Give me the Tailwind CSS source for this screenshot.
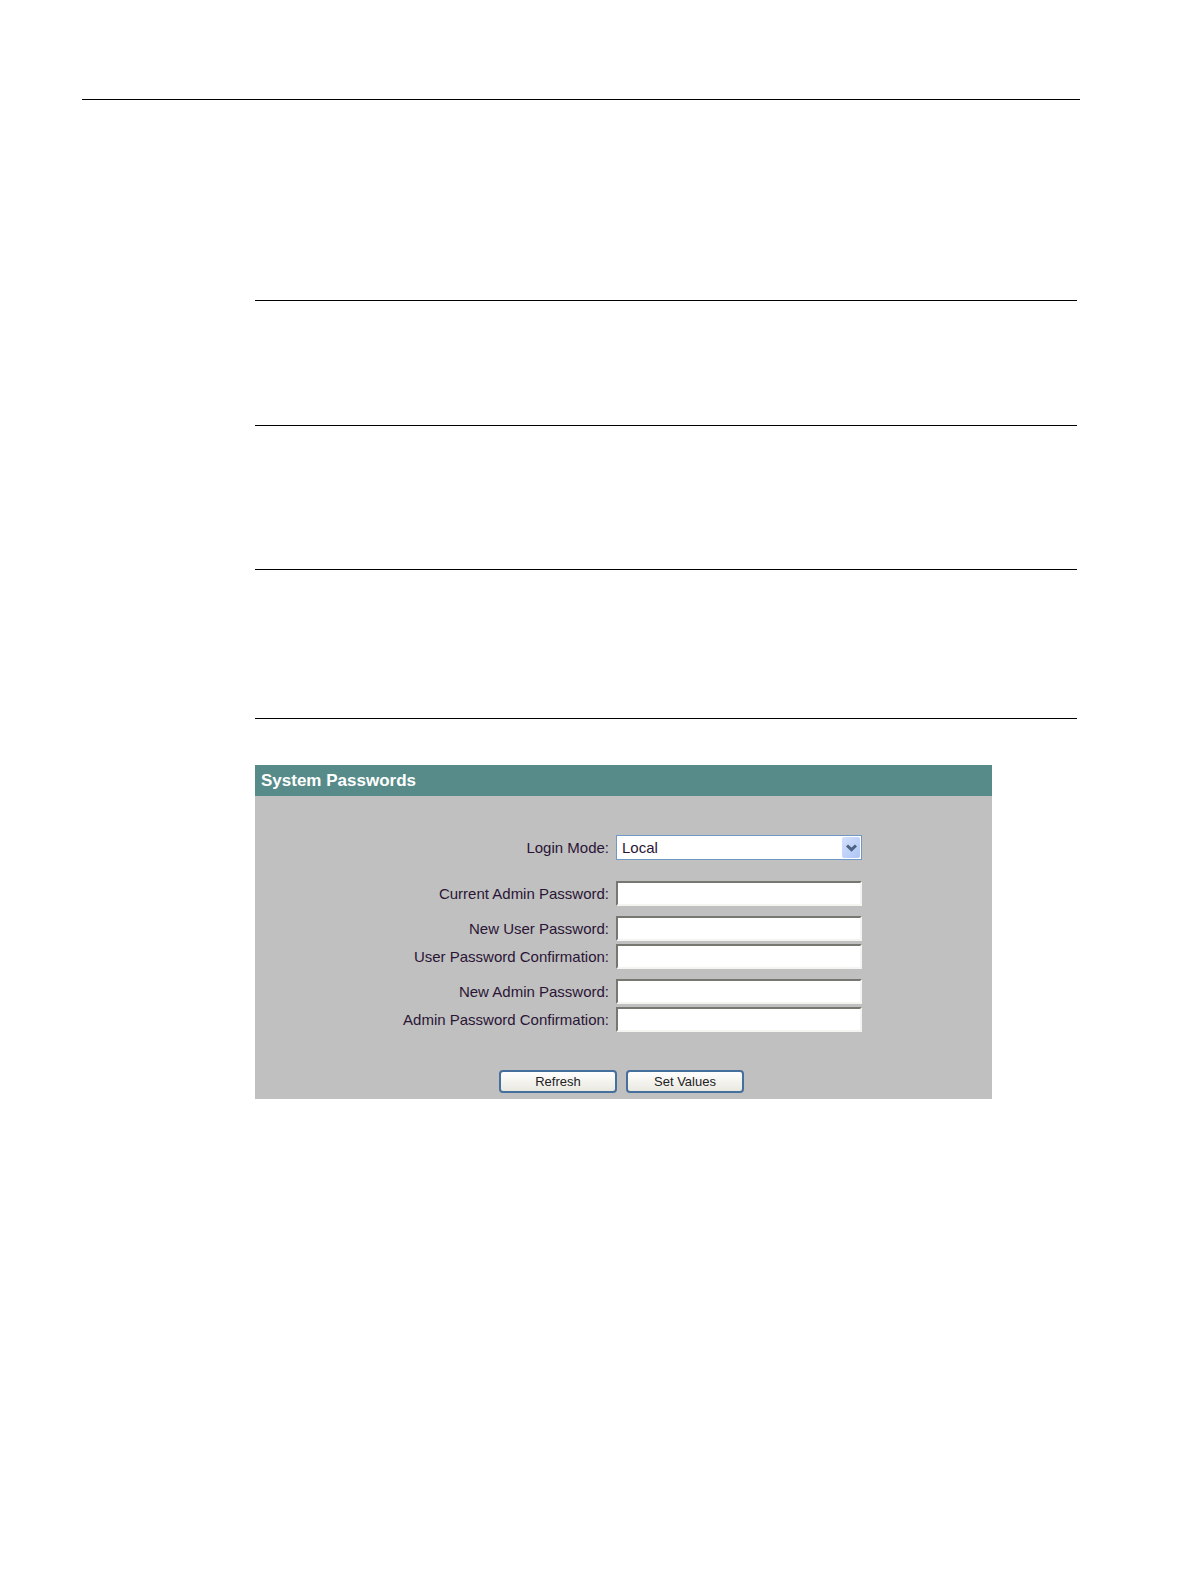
<!DOCTYPE html>
<html lang="en">
<head>
  <meta charset="UTF-8" />
  <meta name="viewport" content="width=device-width, initial-scale=1" />
  <title>System Passwords</title>
  <script src="https://cdn.jsdelivr.net/npm/@tailwindcss/browser@4"></script>
</head>

<body class="bg-white min-h-screen pl-[82px] pr-[111px] pt-[99px] font-['Liberation_Sans',Arial,sans-serif]">

  <hr class="border-black" />

  <main class="ml-[173px] mr-[3px] pt-[200px]">
    <!-- Section rules -->
    <hr class="border-black" />
    <hr class="border-black mt-[124px]" />
    <hr class="border-black mt-[143px]" />
    <hr class="border-black mt-[148px]" />

    <!-- System Passwords -->
    <form class="mt-[46px] max-w-[737px] bg-[#c0c0c0] pb-[6px]">
      <h1 class="bg-[#568b89] px-[6px] text-[17px] leading-[31px] font-bold text-white">System Passwords</h1>

      <div class="mt-[39px] grid grid-cols-[1fr_246px_123px] items-center gap-x-[7px] text-[15px] leading-[25px] text-[#2a1536]">
        <label for="loginMode" class="text-right">Login Mode:</label>
        <div class="relative col-span-2 w-[246px]">
          <select id="loginMode" name="loginMode" class="block h-[25px] w-full appearance-none border border-[#7098c4] bg-white px-[5px] text-[15px] leading-[23px]">
            <option>Local</option>
            <option>RADIUS</option>
          </select>
          <span class="pointer-events-none absolute top-[2px] right-[2px] flex h-[21px] w-[18px] items-center justify-center rounded-xs bg-linear-to-br from-[#d3e0fd] to-[#aec5f4]">
            <svg class="h-[8px] w-[11px]" viewBox="0 0 11 8" fill="none" stroke="#4d6185" stroke-width="3">
              <path d="M1 1.5l4.5 4.2L10 1.5" />
            </svg>
          </span>
        </div>

        <label for="currentAdmin" class="mt-[21px] text-right">Current Admin Password:</label>
        <input id="currentAdmin" type="password" class="col-span-2 mt-[21px] h-[25px] w-[246px] border-2 border-t-[#777772] border-l-[#777772] border-r-[#f4f4f0] border-b-[#f4f4f0] bg-white px-1" />

        <label for="newUser" class="mt-[10px] text-right">New User Password:</label>
        <input id="newUser" type="password" class="col-span-2 mt-[10px] h-[25px] w-[246px] border-2 border-t-[#777772] border-l-[#777772] border-r-[#f4f4f0] border-b-[#f4f4f0] bg-white px-1" />

        <label for="confirmUser" class="mt-[3px] text-right">User Password Confirmation:</label>
        <input id="confirmUser" type="password" class="col-span-2 mt-[3px] h-[25px] w-[246px] border-2 border-t-[#777772] border-l-[#777772] border-r-[#f4f4f0] border-b-[#f4f4f0] bg-white px-1" />

        <label for="newAdmin" class="mt-[10px] text-right">New Admin Password:</label>
        <input id="newAdmin" type="password" class="col-span-2 mt-[10px] h-[25px] w-[246px] border-2 border-t-[#777772] border-l-[#777772] border-r-[#f4f4f0] border-b-[#f4f4f0] bg-white px-1" />

        <label for="confirmAdmin" class="mt-[3px] text-right">Admin Password Confirmation:</label>
        <input id="confirmAdmin" type="password" class="col-span-2 mt-[3px] h-[25px] w-[246px] border-2 border-t-[#777772] border-l-[#777772] border-r-[#f4f4f0] border-b-[#f4f4f0] bg-white px-1" />
      </div>

      <div class="mt-[38px] flex justify-center gap-[9px] pr-1">
        <button type="button" class="h-[23px] w-[118px] rounded-[4px] border-2 border-[#456f9c] bg-linear-to-b from-white to-[#e9e8e0] text-[13px] leading-[19px] text-[#222]">Refresh</button>
        <button type="submit" class="h-[23px] w-[118px] rounded-[4px] border-2 border-[#456f9c] bg-linear-to-b from-white to-[#e9e8e0] text-[13px] leading-[19px] text-[#222]">Set Values</button>
      </div>
    </form>
  </main>

</body>
</html>
